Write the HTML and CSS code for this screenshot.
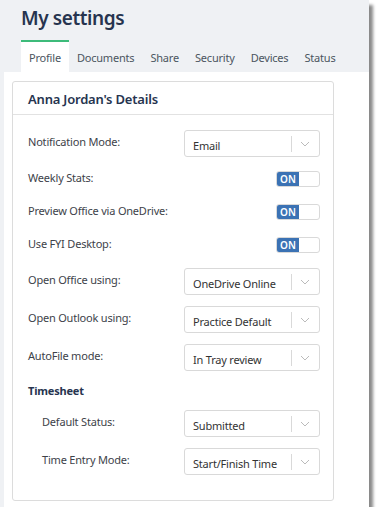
FILE: index.html
```html
<!DOCTYPE html>
<html lang="en">
<head>
    <meta charset="UTF-8">
    <meta name="viewport" content="width=device-width, initial-scale=1.0">
    <title>My settings</title>
    <link rel="stylesheet" href="styles.css">
</head>
<body>
    <div class="window">
        <div class="top">
            <h1>My settings</h1>
            <div class="tabs">
                <span class="tab active">Profile</span>
                <span class="tab">Documents</span>
                <span class="tab">Share</span>
                <span class="tab">Security</span>
                <span class="tab">Devices</span>
                <span class="tab">Status</span>
            </div>
        </div>
        <div class="panel">
            <div class="card">
                <div class="card-head">Anna Jordan's Details</div>
                <div class="card-body">
                    <div class="row first">
                        <label>Notification Mode:</label>
                        <div class="select"><span>Email</span><i class="sep"></i><svg width="10" height="6" viewBox="0 0 10 6"><path d="M1 1l4 4 4-4" fill="none" stroke="#bbb" stroke-width="1"/></svg></div>
                    </div>
                    <div class="row short">
                        <label>Weekly Stats:</label>
                        <div class="toggle"><span>ON</span></div>
                    </div>
                    <div class="row short">
                        <label>Preview Office via OneDrive:</label>
                        <div class="toggle"><span>ON</span></div>
                    </div>
                    <div class="row short">
                        <label>Use FYI Desktop:</label>
                        <div class="toggle"><span>ON</span></div>
                    </div>
                    <div class="row">
                        <label>Open Office using:</label>
                        <div class="select"><span>OneDrive Online</span><i class="sep"></i><svg width="10" height="6" viewBox="0 0 10 6"><path d="M1 1l4 4 4-4" fill="none" stroke="#bbb" stroke-width="1"/></svg></div>
                    </div>
                    <div class="row">
                        <label>Open Outlook using:</label>
                        <div class="select"><span>Practice Default</span><i class="sep"></i><svg width="10" height="6" viewBox="0 0 10 6"><path d="M1 1l4 4 4-4" fill="none" stroke="#bbb" stroke-width="1"/></svg></div>
                    </div>
                    <div class="row">
                        <label>AutoFile mode:</label>
                        <div class="select"><span>In Tray review</span><i class="sep"></i><svg width="10" height="6" viewBox="0 0 10 6"><path d="M1 1l4 4 4-4" fill="none" stroke="#bbb" stroke-width="1"/></svg></div>
                    </div>
                    <div class="section">Timesheet</div>
                    <div class="row indent">
                        <label>Default Status:</label>
                        <div class="select"><span>Submitted</span><i class="sep"></i><svg width="10" height="6" viewBox="0 0 10 6"><path d="M1 1l4 4 4-4" fill="none" stroke="#bbb" stroke-width="1"/></svg></div>
                    </div>
                    <div class="row indent">
                        <label>Time Entry Mode:</label>
                        <div class="select"><span>Start/Finish Time</span><i class="sep"></i><svg width="10" height="6" viewBox="0 0 10 6"><path d="M1 1l4 4 4-4" fill="none" stroke="#bbb" stroke-width="1"/></svg></div>
                    </div>
                </div>
            </div>
        </div>
    </div>
</body>
</html>
```

FILE: styles.css
```css
body {
    margin: 0;
    background: #fff;
    font-family: "Noto Sans", "Open Sans", sans-serif;
    color: #3d4249;
}
.window {
    width: 365px;
    height: 507px;
    padding-left: 4px;
    background: #eff1f4;
    box-shadow: 4px 5px 3px #8a8a8a;
    display: flex;
    flex-direction: column;
}
.top {
    padding-left: 17px;
}
h1 {
    margin: 0;
    padding-top: 5px;
    height: 35px;
    font-size: 19px;
    font-weight: 600;
    letter-spacing: -0.4px;
    color: #26344f;
}
.tabs {
    display: flex;
    height: 32px;
}
.tab {
    padding: 10px 8px 0;
    font-size: 11px;
    letter-spacing: -0.2px;
    color: #4b5560;
}
.tab.active {
    background: #fff;
    border-top: 2px solid #3dbb7a;
    padding-top: 8px;
}
.panel {
    flex: 1;
    background: #fff;
    padding: 9px 35px 6px 8px;
}
.card {
    height: 100%;
    box-sizing: border-box;
    border: 1px solid #dcdcdc;
    border-radius: 3px;
}
.card-head {
    height: 33px;
    box-sizing: border-box;
    padding: 8px 0 0 15px;
    border-bottom: 1px solid #e2e2e2;
    font-size: 13px;
    font-weight: 600;
    letter-spacing: -0.2px;
    color: #26344f;
}
.card-body {
    padding: 15px 13px 0 15px;
}
.row {
    display: flex;
    justify-content: space-between;
    align-items: flex-start;
    height: 38px;
    font-size: 11px;
    letter-spacing: -0.2px;
}
.row.first {
    height: 39px;
}
.row label {
    padding-top: 4px;
}
.row.short {
    height: 33px;
}
.row.short label {
    padding-top: 1px;
}
.row.indent label {
    padding-left: 14px;
}
.select {
    width: 136px;
    height: 27px;
    box-sizing: border-box;
    border: 1px solid #d9d9d9;
    border-radius: 3px;
    display: flex;
    align-items: center;
    padding: 3px 9px 0 8px;
    color: #333;
}
.select span {
    flex: 1;
}
.sep {
    width: 1px;
    height: 16px;
    background: #d9d9d9;
    margin: 0 8px 3px 0;
}
.select svg {
    margin-bottom: 3px;
}
.toggle {
    width: 44px;
    height: 16px;
    box-sizing: border-box;
    border: 1px solid #d9d9d9;
    border-radius: 3px;
    margin-top: 2px;
    overflow: hidden;
}
.toggle span {
    display: block;
    width: 22px;
    height: 100%;
    background: #3b72b4;
    color: #fff;
    font-size: 10px;
    font-weight: 600;
    letter-spacing: 0;
    line-height: 14px;
    text-align: center;
}
.section {
    font-size: 11px;
    font-weight: 700;
    letter-spacing: -0.2px;
    color: #26344f;
    height: 28px;
    padding-top: 1px;
    box-sizing: border-box;
}
```
